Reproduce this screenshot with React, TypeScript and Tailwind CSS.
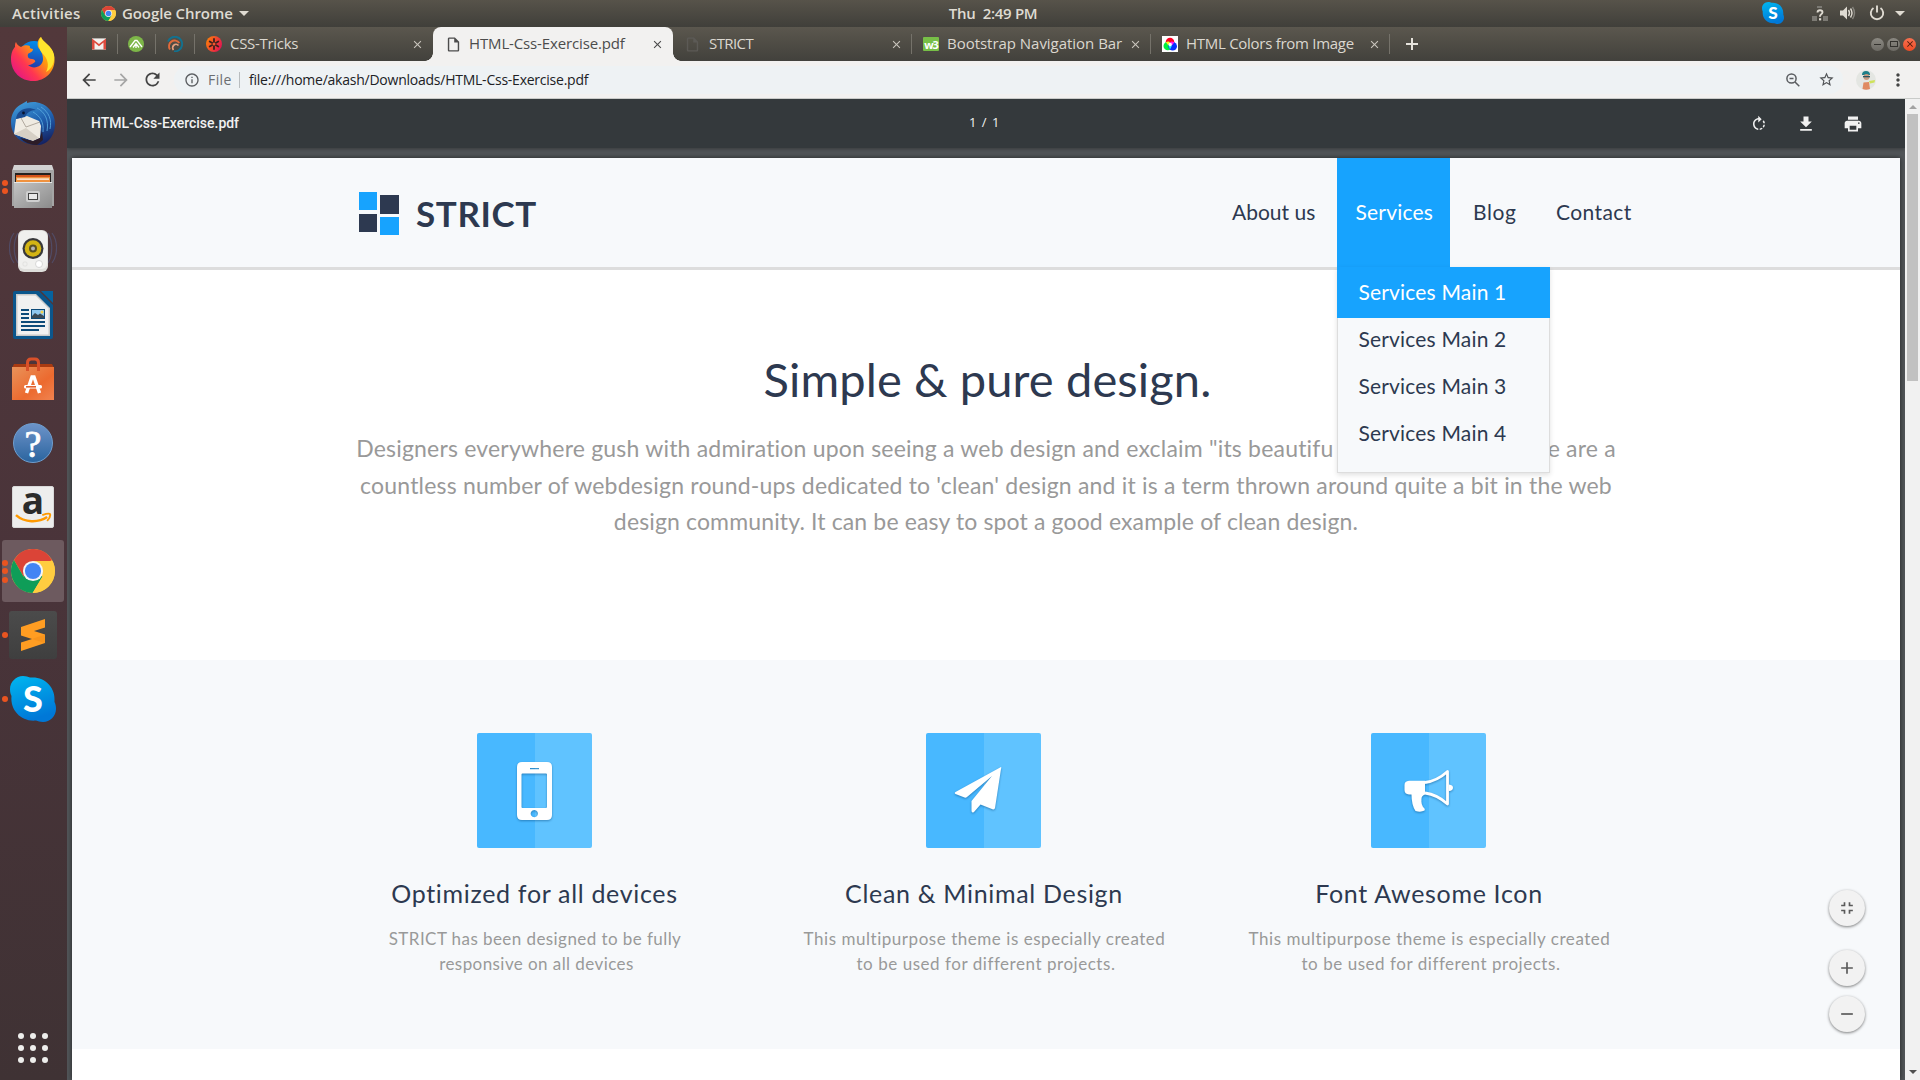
import type { ReactNode } from "react";
import {
  MdAdd,
  MdArrowBack,
  MdArrowForward,
  MdFileDownload,
  MdFullscreenExit,
  MdMoreVert,
  MdOutlineInfo,
  MdOutlineInsertDriveFile,
  MdPrint,
  MdRefresh,
  MdRemove,
  MdRotateRight,
  MdStarBorder,
  MdClose,
} from "react-icons/md";

function ChromeLogo({ className }: { className: string }) {
  return (
    <svg viewBox="0 0 48 48" className={className}>
      <circle cx="24" cy="24" r="24" fill="#ffcd40" />
      <path d="M24 24 L44.8 12 A24 24 0 0 0 3.2 12 L13.6 30 Z" fill="#db4437" />
      <path d="M3.2 12 A24 24 0 0 0 23.6 48 L34.4 30 L24 24 L13.6 30 Z" fill="#0f9d58" />
      <path d="M24 13 L45.2 13 A24 24 0 0 1 23.6 48 L34.4 30 Z" fill="#ffcd40" />
      <circle cx="24" cy="24" r="11" fill="#f5f5f5" />
      <circle cx="24" cy="24" r="8.8" fill="#4285f4" />
    </svg>
  );
}

function FirefoxIcon() {
  return (
    <svg viewBox="0 0 44 46" className="h-[46px] w-[44px]">
      <defs>
        <linearGradient id="ffBody" x1="1" y1="0.1" x2="0.1" y2="0.9">
          <stop offset="0" stopColor="#ffe226" />
          <stop offset="0.4" stopColor="#ff980e" />
          <stop offset="0.7" stopColor="#ff3750" />
          <stop offset="1" stopColor="#e31587" />
        </linearGradient>
        <linearGradient id="ffGlobe" x1="0.6" y1="0" x2="0.4" y2="1">
          <stop offset="0" stopColor="#0090ed" />
          <stop offset="1" stopColor="#2a2a9a" />
        </linearGradient>
      </defs>
      <circle cx="23" cy="21" r="16" fill="url(#ffGlobe)" />
      <path
        d="M5 6 C6 9 8 10 10 11 C13 9 16 9 19 10 C18 12 20 13 22 13 C22 16 18 17 17 18 C16 22 18 23 21 23 C23 23 25 25 24 26 C22 27 21 29 17 29 C22 34 32 31 32 23 C32 17 29 14 27 11 C26 7 27 3 30 1 C31 6 41 9 43 19 C46 33 36 45 22 45 C10 45 0 36 0 23 C0 17 2 13 4 11 C4 9 4 7 5 6 Z"
        fill="url(#ffBody)"
      />
      <path d="M30 1 C31 6 41 9 43 19 C44 26 41 33 35 36 C39 29 36 22 32 18 C28 14 26 7 30 1 Z" fill="#ffe52e" />
    </svg>
  );
}

function ThunderbirdIcon() {
  return (
    <svg viewBox="0 0 44 46" className="h-[46px] w-[44px]">
      <defs>
        <linearGradient id="tbBlue" x1="0.3" y1="0" x2="0.7" y2="1">
          <stop offset="0" stopColor="#3f9ad8" />
          <stop offset="0.5" stopColor="#1f5fae" />
          <stop offset="1" stopColor="#14205f" />
        </linearGradient>
      </defs>
      <path d="M9 5 L16 1 L16 3 C30 -1 44 9 44 24 C44 37 35 46 25 45 C10 44 0 36 0 22 C0 14 4 8 9 5 Z" fill="url(#tbBlue)" />
      <path d="M5 19 L16 16 L28 21 L30 26 L29 38 L22 41 L3 34 Z" fill="#efebe2" />
      <path d="M3 34 L15 28 L28 38 L22 41 Z" fill="#d6d0c5" />
      <path d="M10 18 L15 27 L29 22" fill="none" stroke="#a9a296" strokeWidth="0.9" />
      <path d="M9 38 L22 41 L29 38 L31 31 L32 40 L26 45 Q16 45 9 38 Z" fill="#2c1c27" />
      <path d="M5 19 C6 9 17 6 25 10 C19 10 16 13 14 17 Z" fill="#1b4c91" />
      <path d="M26 8 C34 12 38 20 36 31 M30 7 C38 12 41 20 39 29 M22 12 C29 16 33 22 32 32" fill="none" stroke="#56a5dc" strokeWidth="0.9" />
      <circle cx="12.5" cy="13" r="1.4" fill="#0a1530" />
    </svg>
  );
}

function FilesIcon() {
  return (
    <svg viewBox="0 0 42 44" className="h-[44px] w-[42px]">
      <defs>
        <linearGradient id="cab" x1="0" y1="0" x2="1" y2="1">
          <stop offset="0" stopColor="#c4c4c4" />
          <stop offset="1" stopColor="#8b8b8b" />
        </linearGradient>
      </defs>
      <path d="M2 0 H40 L42 6 V41 H0 V6 Z" fill="#d2d2d2" />
      <rect x="0" y="5" width="42" height="36" fill="#a5a5a5" />
      <rect x="3" y="8" width="36" height="12" fill="#26211f" />
      <rect x="4" y="10" width="34" height="4" fill="#d5531b" />
      <rect x="4" y="12" width="34" height="6" fill="#f0923f" />
      <rect x="5" y="13.5" width="32" height="1.2" fill="#fff" />
      <path d="M2 17 H40 V43 H2 Z" fill="url(#cab)" />
      <rect x="2" y="17" width="38" height="1" fill="#e6e6e6" />
      <rect x="14" y="26" width="14" height="11" rx="2" fill="#cfcfcf" />
      <rect x="16.500" y="28.500" width="9" height="6" fill="#e9e9e9" stroke="#444" />
    </svg>
  );
}

function SpeakerIcon() {
  return (
    <svg viewBox="0 0 48 44" className="h-[44px] w-[48px]">
      <g fill="none" stroke="#525374" strokeOpacity="0.75" strokeWidth="1.2">
        <path d="M5 4 C-1 12 -1 26 5 34 M9 4 C4 12 4 26 9 34 M43 4 C49 12 49 26 43 34 M39 4 C44 12 44 26 39 34" />
      </g>
      <rect x="9" y="1" width="30" height="42" rx="6" fill="#dededb" />
      <rect x="10" y="2" width="28" height="38" rx="5" fill="#f0f0ee" />
      <circle cx="24" cy="19.500" r="10.5" fill="#38383a" />
      <circle cx="24" cy="19.500" r="8.300" fill="#d3b413" />
      <circle cx="24" cy="19.500" r="4" fill="#5a5122" />
      <circle cx="24" cy="19.500" r="2" fill="#b5b5b5" />
      <circle cx="30" cy="35" r="3.500" fill="#fff" stroke="#c9c9c9" strokeWidth="0.7" />
      <rect x="14" y="33" width="4" height="4" rx="1" fill="none" stroke="#dcdcda" strokeWidth="0.7" />
    </svg>
  );
}

function WriterIcon() {
  return (
    <svg viewBox="0 0 40 48" className="h-[48px] w-[40px]">
      <path d="M2 0 H26 L40 14 V46 Q40 48 38 48 H2 Q0 48 0 46 V2 Q0 0 2 0 Z" fill="#0b568c" />
      <path d="M28 0 H40 V12 Z" fill="#06639f" />
      <path d="M3 3 H23 L37 17 V45 H3 Z" fill="#c9c9c9" />
      <path d="M4.500 4.500 H22.500 L35.500 17.500 V43.500 H4.500 Z" fill="#f1f1f1" />
      <g fill="#0d4a78">
        <rect x="8" y="18" width="8" height="2" />
        <rect x="8" y="22" width="8" height="2" />
        <rect x="8" y="26" width="8" height="2" />
        <rect x="8" y="30" width="24" height="2" />
        <rect x="8" y="34" width="24" height="2" />
        <rect x="8" y="38" width="18" height="2" />
        <rect x="18" y="18" width="14" height="10" />
      </g>
      <rect x="19" y="19" width="12" height="8" fill="#8fc8f0" />
      <circle cx="29" cy="21" r="1.500" fill="#f5d24a" />
      <path d="M19 27 V25 L22 22 L25 24 L27 22.500 L31 25 V27 Z" fill="#3b4a55" />
    </svg>
  );
}

function SoftwareIcon() {
  return (
    <svg viewBox="0 0 42 44" className="h-[44px] w-[42px]">
      <defs>
        <linearGradient id="bag" x1="0" y1="0" x2="1" y2="1">
          <stop offset="0" stopColor="#e9935a" />
          <stop offset="0.6" stopColor="#ec6a2f" />
          <stop offset="1" stopColor="#f08350" />
        </linearGradient>
      </defs>
      <path d="M2 7 H40 L42 11 H0 Z" fill="#a83b12" />
      <rect y="10" width="42" height="33" fill="url(#bag)" />
      <path d="M15.500 14 V6 Q15.500 2 19 2 H23 Q26.500 2 26.500 6 V14" fill="none" stroke="#d9512a" strokeWidth="3" />
      <path d="M14.500 36 L20 20 H22 L27.500 36" fill="none" stroke="#fff" strokeWidth="3.400" />
      <rect x="12" y="28" width="18" height="3.600" rx="1.500" fill="#fff" />
      <rect x="14" y="29" width="10" height="1.600" fill="#e2602c" />
    </svg>
  );
}

function SkypeIcon({ className }: { className: string }) {
  return (
    <svg viewBox="0 0 46 46" className={className}>
      <defs>
        <linearGradient id="sky" x1="0" y1="0" x2="0.3" y2="1">
          <stop offset="0" stopColor="#00b7f0" />
          <stop offset="1" stopColor="#0078d7" />
        </linearGradient>
      </defs>
      <path
        d="M13 0 C16 0 18 1 20 1.600 C34 0 46 11 44.500 26 C45.500 28 46 30 46 33 C46 40 40 46 33 46 C30 46 28 45 26 44.500 C12 46 0 35 1.500 20 C0.500 18 0 16 0 13 C0 6 6 0 13 0 Z"
        fill="url(#sky)"
      />
      <text x="23" y="35.500" textAnchor="middle" fontFamily="Lato, sans-serif" fontWeight="900" fontSize="36" fill="#fff">
        S
      </text>
    </svg>
  );
}

function SublimeIcon() {
  return (
    <div className="flex h-[48px] w-[48px] items-center justify-center rounded-[3px] bg-gradient-to-b from-[#4b4b4b] to-[#3f3f3f]">
      <svg viewBox="0 0 24 32" className="h-[32px] w-[24px]">
        <path d="M0 8 L24 0 V8.500 L13 12 L24 15.500 V24 L0 32 V23.500 L11 20 L0 16.500 Z" fill="#ff9d22" />
        <path d="M11 20 L24 15.500 V24 Z" fill="#f08c18" fillOpacity="0.5" />
      </svg>
    </div>
  );
}

function DockItem({ dots = 0, active = false, children }: { dots?: number; active?: boolean; children: ReactNode }) {
  return (
    <div className="relative flex h-16 w-full items-center justify-center pr-px">
      {active && <div className="absolute top-[1px] left-[2px] h-[62px] w-[62px] rounded-[3px] bg-[#6d5a5f]" />}
      <div className="absolute top-0 left-[2px] flex h-full w-[6px] flex-col items-center justify-center gap-[2.500px]">
        {Array.from({ length: dots }, (_, i) => (
          <span key={i} className="size-[6px] rounded-full bg-[#ea5420]" />
        ))}
      </div>
      <div className="relative flex items-center justify-center">{children}</div>
    </div>
  );
}

function Dock() {
  return (
    <aside className="flex w-[67px] shrink-0 flex-col justify-between bg-gradient-to-b from-[#52383b] via-[#4a343a] to-[#3f3234] pb-[17px]">
      <div>
        <DockItem><FirefoxIcon /></DockItem>
        <DockItem><ThunderbirdIcon /></DockItem>
        <DockItem dots={2}><FilesIcon /></DockItem>
        <DockItem><SpeakerIcon /></DockItem>
        <DockItem><WriterIcon /></DockItem>
        <DockItem><SoftwareIcon /></DockItem>
        <DockItem>
          <div className="flex size-[40px] items-center justify-center rounded-full border border-[#6f9fd0] bg-gradient-to-b from-[#6c93c9] to-[#2a659f] font-['Liberation_Serif',serif] text-[38px] leading-none text-white [-webkit-text-stroke:0.8px_white]">
            <span className="mt-[1px]">?</span>
          </div>
        </DockItem>
        <DockItem>
          <div className="relative flex size-[42px] justify-center rounded-[2px] border border-[#d8d8d8] bg-[#ededed]">
            <span className="-mt-[5px] font-['Open_Sans',sans-serif] text-[37px] leading-[36px] font-bold text-[#2b2b2b]">a</span>
            <svg viewBox="0 0 38 12" className="absolute bottom-[3px] left-[2px] h-[12px] w-[37px]">
              <path d="M1 3 C10 11 24 11 33 5" fill="none" stroke="#ff9900" strokeWidth="2.600" />
              <path d="M28 3 C31 2 35 1 36 2 C36.500 4 35 7 33 9" fill="none" stroke="#ff9900" strokeWidth="2" />
            </svg>
          </div>
        </DockItem>
        <DockItem dots={3} active><ChromeLogo className="size-[44px]" /></DockItem>
        <DockItem dots={1}><SublimeIcon /></DockItem>
        <DockItem dots={1}><SkypeIcon className="size-[46px]" /></DockItem>
      </div>
      <div className="ml-[18px] grid w-[30px] grid-cols-3 gap-[6px]">
        {Array.from({ length: 9 }, (_, i) => (
          <span key={i} className="size-[6px] rounded-full bg-[#eeeeec]" />
        ))}
      </div>
    </aside>
  );
}

function SystemBar() {
  return (
    <header className="flex h-[27px] items-center bg-gradient-to-b from-[#57534a] to-[#403f3a] pb-px font-['Open_Sans',sans-serif] text-[15px] font-semibold text-[#dfdbd2]">
      <span className="ml-[12px] w-[89px] tracking-[0.29px]">Activities</span>
      <ChromeLogo className="size-[15px]" />
      <span className="ml-[6px] tracking-[-0.09px]">Google Chrome</span>
      <Caret className="ml-[6px]" />
      <span className="ml-[700px] w-[34px] tracking-[-0.2px]">Thu</span>
      <span className="tracking-[-0.3px]">2:49 PM</span>
      <div className="ml-auto flex items-center pr-[15px]">
        <SkypeIcon className="size-[22px]" />
        <svg viewBox="0 0 16 16" className="ml-[28px] size-[16px]">
          <path d="M0 11 H5 V16 H0 Z M11 11 H16 V16 H11 Z M5 1 H10 V3 H5 Z" fill="#7c7a74" />
          <path d="M5.500 7.500 Q5.600 5.200 8 5.200 Q10.500 5.200 10.500 7.300 Q10.500 8.500 9 9.500 Q8 10.200 8 11.800" fill="none" stroke="#dfdbd2" strokeWidth="1.900" />
          <rect x="7" y="13.200" width="2.200" height="2.200" fill="#dfdbd2" />
        </svg>
        <svg viewBox="0 0 16 14" className="ml-[12px] h-[14px] w-[16px]">
          <path d="M0 4.500 H3 L7 0.500 V13.500 L3 9.500 H0 Z" fill="#dfdbd2" />
          <path d="M8.500 4 Q10.500 7 8.500 10 M10.500 2.500 Q13.500 7 10.500 11.500" fill="none" stroke="#dfdbd2" strokeWidth="1.400" />
          <path d="M12.500 1 Q16.500 7 12.500 13" fill="none" stroke="#85837c" strokeWidth="1.400" />
        </svg>
        <svg viewBox="0 0 16 16" className="ml-[13px] size-[16px]">
          <path d="M4.500 3 A6.200 6.200 0 1 0 11.500 3 M8 0.500 V7.500" fill="none" stroke="#dfdbd2" strokeWidth="1.900" />
        </svg>
        <Caret className="ml-[10px]" />
      </div>
    </header>
  );
}

function Caret({ className }: { className: string }) {
  return (
    <svg viewBox="0 0 10 5" className={`${className} h-[5px] w-[10px]`}>
      <path d="M0 0 H10 L5 5 Z" fill="#dfdbd2" />
    </svg>
  );
}

function TabClose({ dark = false }: { dark?: boolean }) {
  return <MdClose className={dark ? "size-[13px] shrink-0 text-[#4a4a4a]" : "size-[13px] shrink-0 text-[#c9c5bd]"} />;
}

function TabDivider() {
  return <span className="h-[20px] w-px shrink-0 bg-[#75726a]" />;
}

function TabStrip() {
  return (
    <div className="flex h-[34px] items-center bg-gradient-to-b from-[#5b574e] to-[#42413c] font-['Open_Sans',sans-serif] text-[15px] text-[#dbd7cf]">
      <svg viewBox="0 0 15 12" className="ml-[25px] h-[12px] w-[14px]">
        <path d="M0 0 H15 V12 H0 Z" fill="#f3f1ee" />
        <path d="M0 0 L7.500 6 L15 0 V12 H12.300 V4.500 L7.500 8.500 L2.700 4.500 V12 H0 Z" fill="#dd4b3e" />
      </svg>
      <span className="ml-[11px] h-[20px] w-px bg-[#75726a]" />
      <svg viewBox="0 0 16 16" className="ml-[10px] size-[16px]">
        <circle cx="8" cy="8" r="8" fill="#7db648" />
        <path d="M2 11 L7 4.500 H9 L14 11 M5 11.500 L8 7.500 L11 11.500 M8 9 V12" fill="none" stroke="#fff" strokeWidth="1.300" />
      </svg>
      <span className="ml-[11px] h-[20px] w-px bg-[#75726a]" />
      <svg viewBox="0 0 16 16" className="ml-[11px] size-[16px]">
        <path d="M1 5.500 A7.300 7.300 0 1 1 7 15.300" fill="none" stroke="#13718f" strokeWidth="1.900" />
        <path d="M3 13.500 A5.300 5.300 0 1 1 12.300 7" fill="none" stroke="#e06a3b" strokeWidth="1.900" />
        <path d="M6.500 14 A3.200 3.200 0 0 1 11.500 9.500" fill="none" stroke="#e8a07e" strokeWidth="1.700" />
      </svg>
      <span className="ml-[11px] h-[20px] w-px bg-[#75726a]" />

      <div className="flex h-full w-[238px] items-center pr-[9px] pl-[11px]">
        <svg viewBox="0 0 16 16" className="size-[16px]">
          <defs>
            <linearGradient id="ct" x1="0" y1="0" x2="1" y2="0.5">
              <stop offset="0" stopColor="#ff8a00" />
              <stop offset="1" stopColor="#e5194e" />
            </linearGradient>
          </defs>
          <circle cx="8" cy="8" r="8" fill="url(#ct)" />
          <g stroke="#3d211e" strokeWidth="1.800" strokeLinecap="round">
            <path d="M8 3 V13 M3.700 5.500 L12.300 10.500 M12.300 5.500 L3.700 10.500" />
          </g>
          <circle cx="8" cy="8" r="1.500" fill="#f4572f" />
        </svg>
        <span className="mb-[2px] ml-[8px] tracking-[-0.3px]">CSS-Tricks</span>
        <span className="ml-auto flex"><TabClose /></span>
      </div>

      <div className="relative flex h-full w-[240px] items-center rounded-t-[8px] bg-[#f2f1f0] pr-[9px] pl-[12px] text-[#4c4c4c]">
        <span className="absolute bottom-0 -left-[8px] size-[8px] bg-[radial-gradient(circle_at_0_0,transparent_7.500px,#f2f1f0_8px)]" />
        <span className="absolute -right-[8px] bottom-0 size-[8px] bg-[radial-gradient(circle_at_100%_0,transparent_7.500px,#f2f1f0_8px)]" />
        <MdOutlineInsertDriveFile className="size-[17px] text-[#4c4c4c]" />
        <span className="mb-[2px] ml-[7px] tracking-[-0.14px]">HTML-Css-Exercise.pdf</span>
        <span className="ml-auto flex"><TabClose dark /></span>
      </div>

      <div className="flex h-full w-[238px] items-center pr-[8px] pl-[11px]">
        <MdOutlineInsertDriveFile className="size-[17px] text-[#5c5a56]" />
        <span className="mb-[2px] ml-[8px] tracking-[-0.6px]">STRICT</span>
        <span className="ml-auto flex"><TabClose /></span>
      </div>
      <TabDivider />

      <div className="flex h-full w-[238px] items-center pr-[8px] pl-[11px]">
        <span className="flex h-[14px] w-[16px] items-center justify-center rounded-[1px] bg-[#77bf47] text-[11px] leading-none font-bold tracking-[-1px] text-white">
          w3
        </span>
        <span className="mb-[2px] ml-[8px] whitespace-nowrap tracking-[-0.03px]">Bootstrap Navigation Bar</span>
        <span className="ml-auto flex"><TabClose /></span>
      </div>
      <TabDivider />

      <div className="flex h-full w-[238px] items-center pr-[8px] pl-[11px]">
        <svg viewBox="0 0 16 16" className="size-[16px]">
          <rect width="16" height="16" fill="#fff" />
          <circle cx="8" cy="6" r="4.300" fill="#ff0022" />
          <circle cx="5.800" cy="10" r="4.300" fill="#00f040" />
          <circle cx="10.700" cy="10.300" r="4.300" fill="#0830ff" />
          <path d="M3.900 6.200 Q7 4.500 8 7 L6 9 Z" fill="#ffee20" />
          <path d="M12.300 6.200 Q9 4.500 8 7 L10.500 9 Z" fill="#ff20f0" />
          <path d="M6.500 9.500 L8 13.500 L10 9.500 Z" fill="#20f0ff" />
          <circle cx="8.200" cy="8.500" r="1.700" fill="#fff" />
        </svg>
        <span className="mb-[2px] ml-[8px] whitespace-nowrap tracking-[-0.28px]">HTML Colors from Image</span>
        <span className="ml-auto flex"><TabClose /></span>
      </div>
      <TabDivider />

      <svg viewBox="0 0 12 12" className="ml-[16px] size-[12px]">
        <path d="M6 0 V12 M0 6 H12" stroke="#e6e3dc" strokeWidth="2" />
      </svg>
      <div className="ml-auto flex items-center gap-[3px] pr-[4px] text-[#33322e]">
        <span className="flex size-[13px] items-center justify-center rounded-full bg-gradient-to-b from-[#8b8982] to-[#6c6a64]">
          <span className="h-px w-[7px] bg-[#33322e]" />
        </span>
        <span className="flex size-[13px] items-center justify-center rounded-full bg-gradient-to-b from-[#8b8982] to-[#6c6a64]">
          <span className="h-[6px] w-[8px] border border-[#33322e]" />
        </span>
        <span className="flex size-[13px] items-center justify-center rounded-full bg-gradient-to-b from-[#f7704f] to-[#ee4a22]">
          <MdClose className="size-[10px] text-[#4a1a0c]" />
        </span>
      </div>
    </div>
  );
}

function AddressBar() {
  return (
    <div className="flex h-[38px] items-center border-b border-[#c9cbc9] bg-[#f2f1f0] font-['Open_Sans',sans-serif] text-[14px]">
      <MdArrowBack className="ml-[12px] size-[20px] text-[#444]" />
      <MdArrowForward className="ml-[12px] size-[20px] text-[#a5a5a5]" />
      <MdRefresh className="ml-[11px] size-[21px] text-[#444]" />
      <div className="ml-[11px] flex h-[28px] w-[1669px] items-center rounded-full bg-[#eef2f4]">
        <MdOutlineInfo className="ml-[10px] size-[16px] text-[#5a5d60]" />
        <span className="ml-[8px] w-[31px] tracking-[0.4px] text-[#6b6e71]">File</span>
        <span className="h-[16px] w-px bg-[#b9bdbf]" />
        <span className="ml-[9px] tracking-[-0.240px] text-[#202124]">file:///home/akash/Downloads/HTML-Css-Exercise.pdf</span>
        <svg viewBox="0 0 14 14" className="mr-[18px] ml-auto size-[14px]" fill="none" stroke="#5a5d60" strokeWidth="1.500">
          <circle cx="5.500" cy="5.500" r="4.600" />
          <path d="M9 9 L13.300 13.300 M3.500 5.500 H7.500" />
        </svg>
        <MdStarBorder className="mr-[8px] size-[17px] text-[#505356]" />
      </div>
      <svg viewBox="0 0 20 20" className="ml-[13px] size-[20px]">
        <circle cx="10" cy="10" r="10" fill="#e4e6e2" />
        <path d="M6 5 Q6 1 10 1 Q14 1 14 5 Z" fill="#1f7f88" />
        <circle cx="10.500" cy="7" r="3" fill="#c79a80" />
        <path d="M7 6 H14 V7.300 H7 Z" fill="#2c5560" />
        <path d="M6.500 19 L7.500 12.500 L13 12 L14 19 Q10 20.500 6.500 19 Z" fill="#e08a60" />
        <path d="M13 11 L19 10 L18.500 12.500 L14 13.500 Z" fill="#cfe25a" />
      </svg>
      <MdMoreVert className="ml-[12px] size-[20px] text-[#444]" />
    </div>
  );
}

function PdfToolbar() {
  return (
    <div className="relative z-10 flex h-[49px] items-center bg-[#34393c] font-[Roboto,sans-serif] text-white shadow-[0_1px_4px_rgba(0,0,0,0.35)]">
      <span className="ml-[24px] w-[878px] text-[14px] font-medium tracking-[-0.02px] text-[#f1f1f1]">HTML-Css-Exercise.pdf</span>
      <span className="mb-px font-['Open_Sans',sans-serif] text-[13px] tracking-[1px] whitespace-pre text-[#f1f1f1]">1 / 1</span>
      <div className="ml-auto flex items-center pr-[42px] text-[#f1f1f1]">
        <MdRotateRight className="size-[18px]" />
        <MdFileDownload className="ml-[28px] size-[20px]" />
        <MdPrint className="ml-[27px] size-[20px]" />
      </div>
    </div>
  );
}

function SiteHeader() {
  return (
    <div className="flex h-[112px] border-b-[3px] border-[#dddddd] bg-[#f7f9fb] text-[21px] text-[#2d3950]">
      <div className="ml-[287px] flex h-[109px] w-[854px] items-center">
        <div className="mt-[2px] flex gap-[3px]">
          <div className="flex flex-col gap-[4px]">
            <span className="size-[18px] bg-[#17a3fe]" />
            <span className="size-[18px] bg-[#2d3950]" />
          </div>
          <div className="flex flex-col gap-[3px] pt-[3px]">
            <span className="h-[19px] w-[19px] bg-[#2d3950]" />
            <span className="h-[18px] w-[19px] bg-[#17a3fe]" />
          </div>
        </div>
        <span className="mt-[1px] ml-[17px] text-[35px] leading-[42px] font-bold tracking-[0.6px]">STRICT</span>
      </div>
      <nav className="flex h-[109px] leading-[108px]">
        <a className="ml-[19px] w-[105px]">About us</a>
        <div className="relative h-[109px] w-[113px] bg-[#17a3fe] pl-[18.500px] tracking-[0.200px] text-white">
          Services
          <ul className="absolute top-[109px] left-0 h-[206px] w-[213px] border border-t-0 border-[#dddddd] bg-[#f7f9fb] tracking-[0.180px] text-[#2d3950] shadow-[0_2px_5px_rgba(0,0,0,0.12)]">
            <li className="-mx-px h-[51px] bg-[#17a3fe] pl-[21.500px] leading-[50px] text-white">Services Main 1</li>
            <li className="-mt-[3px] h-[47px] pl-[20.500px] leading-[47px]">Services Main 2</li>
            <li className="h-[47px] pl-[20.500px] leading-[47px]">Services Main 3</li>
            <li className="h-[47px] pl-[20.500px] leading-[47px]">Services Main 4</li>
          </ul>
        </div>
        <a className="ml-[23px] w-[83px] tracking-[0.600px]">Blog</a>
        <a className="tracking-[0.420px]">Contact</a>
      </nav>
    </div>
  );
}

function Hero() {
  return (
    <div className="h-[390px] bg-white pt-[81px] text-center">
      <h1 className="pl-[3px] text-[47px] leading-[56px] tracking-[0.130px] text-[#2d3950]">Simple &amp; pure design.</h1>
      <p className="mt-[23px] text-[23px] leading-[36.500px] tracking-[0.200px] whitespace-nowrap text-[#999999]">
        Designers everywhere gush with admiration upon seeing a web design and exclaim "its beautifu
        <span className="inline-block w-[214px]" />
        e are a
        <br />
        countless number of webdesign round-ups dedicated to 'clean' design and it is a term thrown around quite a bit in the web
        <br />
        <span className="tracking-[0.140px]">design community. It can be easy to spot a good example of clean design.</span>
      </p>
    </div>
  );
}

function Tile({ children }: { children: ReactNode }) {
  return (
    <div className="mx-auto size-[115px] overflow-hidden rounded-[2px] bg-[linear-gradient(to_right,#48b8ff_50%,#60c3ff_50%)]">
      <svg viewBox="0 0 115 115" className="size-[115px] drop-shadow-[0_1px_1px_rgba(0,60,110,0.45)]">
        {children}
      </svg>
    </div>
  );
}

function Feature({
  width,
  textSpacing,
  icon,
  title,
  lines,
}: {
  width: string;
  textSpacing: string;
  icon: ReactNode;
  title: string;
  lines: [string, string];
}) {
  return (
    <div className={`${width} shrink-0 text-center`}>
      <Tile>{icon}</Tile>
      <h2 className="mt-[30px] pl-px text-[25px] leading-[30px] tracking-[0.680px] text-[#2d3950]">{title}</h2>
      <p className={`${textSpacing} mt-[18px] pl-[2px] text-[17px] leading-[25px] text-[#999999]`}>
        {lines[0]}
        <span className="block pl-[3px]">{lines[1]}</span>
      </p>
    </div>
  );
}

function Features() {
  return (
    <div className="flex h-[389px] bg-[#f7f9fb] pt-[73px] pl-[237px]">
      <Feature
        width="w-[450px]"
        textSpacing="tracking-[0.430px]"
        title="Optimized for all devices"
        lines={["STRICT has been designed to be fully", "responsive on all devices"]}
        icon={
          <path
            fillRule="evenodd"
            fill="#fff"
            d="M45 29 H70 Q75 29 75 34 V82 Q75 87 70 87 H45 Q40 87 40 82 V34 Q40 29 45 29 Z M44.500 41.500 V74 Q44.500 75 45.500 75 H69 Q70 75 70 74 V41.500 Q70 40.500 69 40.500 H45.500 Q44.500 40.500 44.500 41.500 Z M53 35 V36.200 H62 V35 Z M57.300 77 A3.600 3.600 0 1 0 57.310 77 Z"
          />
        }
      />
      <Feature
        width="w-[449px]"
        textSpacing="tracking-[0.540px]"
        title="Clean & Minimal Design"
        lines={["This multipurpose theme is especially created", "to be used for different projects."]}
        icon={
          <path
            fill="#fff"
            d="M75 34 Q75.500 34 75 36 L69 75 Q68.500 77 66.500 76.300 L54.500 71.500 L48 79 Q45.500 80.500 45.500 77.500 V68 L66 43 L41 64 Q40 65 38.500 64.500 L29.500 61 Q28 60 29.500 59 Z"
          />
        }
      />
      <Feature
        width="w-[441px]"
        textSpacing="tracking-[0.540px]"
        title="Font Awesome Icon"
        lines={["This multipurpose theme is especially created", "to be used for different projects."]}
        icon={
          <g>
            <path fill="#fff" d="M38 47.700 H54 V61.500 Q50 63 50.500 67 Q50 71 52 74 Q54.500 76 53.500 77.500 Q50 79.500 44.500 78 Q40.500 72 40.500 61.500 H38 Q33.500 61 33.500 57 V52 Q33.500 48 38 47.700 Z" />
            <path fill="none" stroke="#fff" strokeWidth="2.800" strokeLinejoin="round" d="M54 49.500 Q66 48 76.500 38.500 V71 Q66 61.500 54 60" />
            <path fill="#fff" d="M78 51.500 Q82 52 82 54.700 Q82 57.500 78 58 Z" />
          </g>
        }
      />
    </div>
  );
}

function ZoomButton({ className, children }: { className?: string; children: ReactNode }) {
  return (
    <div className={`${className ?? ""} flex size-[36px] items-center justify-center rounded-full bg-[#f2f2f2] text-[#5a5a5a] shadow-[0_1px_3px_rgba(0,0,0,0.5)]`}>
      {children}
    </div>
  );
}

function Scrollbar() {
  return (
    <div className="flex w-[15px] shrink-0 flex-col items-center justify-between bg-[#f1f1f1] pt-[6px] pb-[6px]">
      <div className="flex flex-col items-center">
        <svg viewBox="0 0 8 4" className="h-[4px] w-[8px]"><path d="M4 0 L8 4 H0 Z" fill="#a3a3a3" /></svg>
        <div className="mt-[5px] h-[267px] w-[11px] bg-[#c1c1c1]" />
      </div>
      <svg viewBox="0 0 8 4" className="h-[4px] w-[8px]"><path d="M0 0 H8 L4 4 Z" fill="#505050" /></svg>
    </div>
  );
}

export default function App() {
  return (
    <div className="flex h-[1080px] w-[1920px] flex-col overflow-hidden">
      <SystemBar />
      <div className="flex min-h-0 flex-1">
        <Dock />
        <main className="flex min-w-0 flex-1 flex-col">
          <TabStrip />
          <AddressBar />
          <div className="flex min-h-0 flex-1">
            <div className="relative flex min-w-0 flex-1 flex-col overflow-hidden bg-[#525659]">
              <PdfToolbar />
              <div className="mt-[10px] mr-[5px] ml-[5px] min-h-0 flex-1 bg-white font-[Lato,sans-serif] shadow-[0_0_5px_rgba(0,0,0,0.6)]">
                <SiteHeader />
                <Hero />
                <Features />
              </div>
              <div className="absolute right-[40px] bottom-[48px] flex flex-col">
                <ZoomButton className="mb-[24px]"><MdFullscreenExit className="size-[20px]" /></ZoomButton>
                <ZoomButton className="mb-[10px]"><MdAdd className="size-[20px]" /></ZoomButton>
                <ZoomButton><MdRemove className="size-[20px]" /></ZoomButton>
              </div>
            </div>
            <Scrollbar />
          </div>
        </main>
      </div>
    </div>
  );
}
